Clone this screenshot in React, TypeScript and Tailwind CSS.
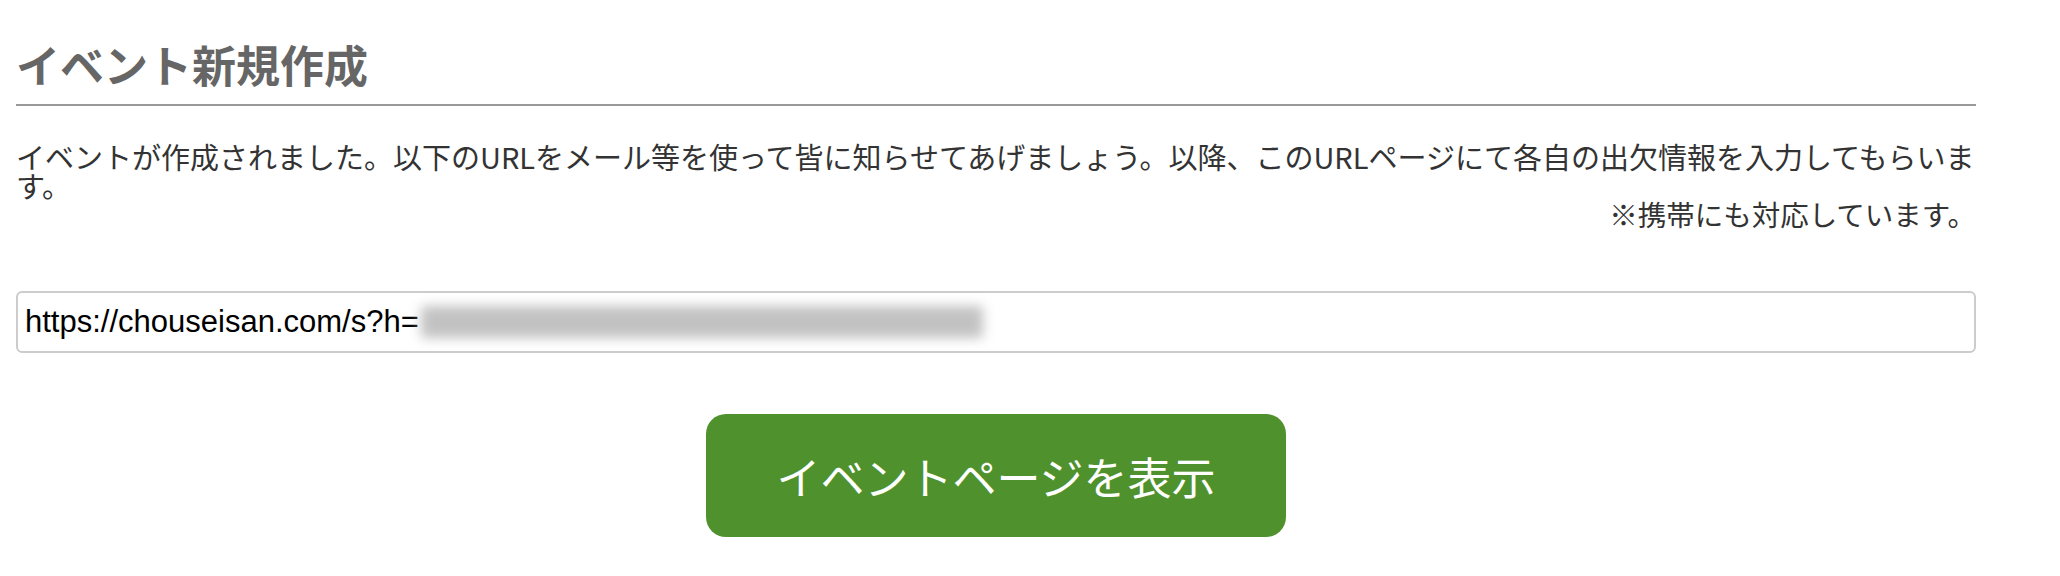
const jp = { fontFamily: '"Noto Sans CJK JP", "Noto Sans", sans-serif' };

export default function App() {
  return (
    <div className="w-[2060px] h-[576px] bg-white pl-4 pt-[42px]" style={jp}>
      <div className="w-[1960px]">
        {/* heading */}
        <h1 className="text-[44px] leading-[44px] font-bold text-[#666] pb-[18px] border-b-2 border-[#999]">
          イベント新規作成
        </h1>

        {/* message */}
        <p className="mt-[36px] text-[29px] leading-[29px] text-[#333] whitespace-nowrap">
          イベントが作成されました。以下のURLをメール等を使って皆に知らせてあげましょう。以降、このURLページにて各自の出欠情報を入力してもらいま
          <br />
          す。
        </p>
        <p className="text-right text-[28.5px] leading-[28px] text-[#333]">※携帯にも対応しています。</p>

        {/* url box */}
        <div className="mt-[63px] h-[62px] border-2 border-[#ccc] rounded-[6px] flex items-center pl-[7px] overflow-hidden">
          <span
            className="text-[31px] text-black whitespace-nowrap"
            style={{ fontFamily: '"Liberation Sans", Arial, sans-serif' }}
          >
            https://chouseisan.com/s?h=
          </span>
          <span className="ml-[2px] h-[32px] w-[562px] bg-[#c2c2c2] blur-[6px] rounded-sm" />
        </div>

        {/* button */}
        <div className="mt-[61px] flex justify-center">
          <button className="w-[580px] h-[123px] rounded-[20px] bg-[#4f922d] text-white text-[44px] leading-none flex items-center justify-center">
            イベントページを表示
          </button>
        </div>
      </div>
    </div>
  );
}
